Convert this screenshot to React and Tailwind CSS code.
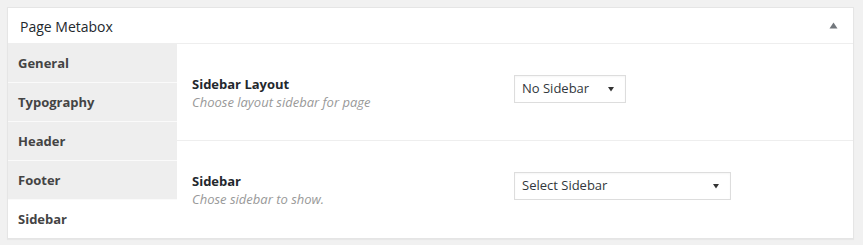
export default function App() {
  const nav = ["General", "Typography", "Header", "Footer", "Sidebar"];
  const font = "font-['Segoe_UI','Open_Sans','Noto_Sans',sans-serif]";
  const Select = ({ label, w }) => (
    <div className={`${w} h-[28px] border border-[#dddddd] bg-white flex items-center justify-between pl-[7px] pr-[11px] text-[13px] text-[#32373c] shadow-[inset_0_1px_2px_rgba(0,0,0,0.04)]`}>
      <span className="pt-[1px]">{label}</span>
      <svg width="6" height="6" viewBox="0 0 6 6"><path d="M0 1 L6 1 L3 5.5 Z" fill="#333" /></svg>
    </div>
  );
  return (
    <div className={`w-[863px] h-[245px] bg-[#f1f1f1] pt-[7px] pl-[7px] ${font}`}>
      <div className="w-[847px] border border-[#e5e5e5] bg-white shadow-[0_1px_1px_rgba(0,0,0,0.04)]">
        <div className="h-[36px] border-b border-[#eeeeee] flex items-center justify-between pl-[12px] pr-[15px]">
          <span className="text-[14px] text-[#23282d] pt-[1px]">Page Metabox</span>
          <svg width="9" height="7" viewBox="0 0 9 7"><path d="M0.5 6.5 L8.5 6.5 L4.5 0.5 Z" fill="#72777c" /></svg>
        </div>
        <div className="flex">
          <div className="w-[169px] flex flex-col">
            {nav.map((n, i) => (
              <div
                key={n}
                className={`flex items-center pl-[10px] pt-[2px] text-[13px] font-bold text-[#444] ${i === 4 ? "h-[38px] bg-white" : "h-[39px] bg-[#eeeeee] border-b border-[#fafafa]"}`}
              >
                {n}
              </div>
            ))}
          </div>
          <div className="flex-1 flex flex-col">
            <div className="h-[97px] border-b border-[#eeeeee] flex items-center pl-[15px]">
              <div className="w-[322px] flex flex-col pt-[2px]">
                <span className="text-[13px] font-bold text-[#23282d] leading-[18px]">Sidebar Layout</span>
                <span className="text-[13px] italic text-[#999] leading-[18px]">Choose layout sidebar for page</span>
              </div>
              <div className="mb-[7px]">
                <Select label="No Sidebar" w="w-[112px]" />
              </div>
            </div>
            <div className="h-[96px] flex items-center pl-[15px]">
              <div className="w-[322px] flex flex-col pt-[2px]">
                <span className="text-[13px] font-bold text-[#23282d] leading-[18px]">Sidebar</span>
                <span className="text-[13px] italic text-[#999] leading-[18px]">Chose sidebar to show.</span>
              </div>
              <div className="mb-[7px]">
                <Select label="Select Sidebar" w="w-[217px]" />
              </div>
            </div>
          </div>
        </div>
      </div>
    </div>
  );
}
